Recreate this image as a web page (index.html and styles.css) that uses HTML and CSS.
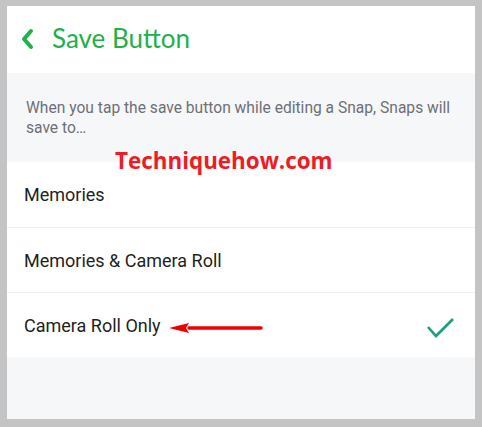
FILE: index.html
```html
<!DOCTYPE html>
<html lang="en">
<head>
    <meta charset="UTF-8">
    <title>Save Button</title>
    <link rel="stylesheet" href="styles.css">
</head>
<body>
    <div class="frame">
        <header class="topbar">
            <svg class="back" width="14" height="22" viewBox="0 0 14 22">
                <path d="M11 3 L4 11 L11 19" fill="none" stroke="#1eb04a" stroke-width="4" stroke-linecap="round" stroke-linejoin="round"/>
            </svg>
            <h1>Save Button</h1>
        </header>

        <div class="note">
            When you tap the save button while editing a Snap, Snaps will save to…
        </div>

        <div class="options">
            <div class="option">Memories</div>
            <div class="option">Memories &amp; Camera Roll</div>
            <div class="option selected">
                <span>Camera Roll Only</span>
                <svg class="check" width="30" height="22" viewBox="0 0 30 22">
                    <path d="M3 10 L11 19 L28 2" fill="none" stroke="#16a07b" stroke-width="2.6"/>
                </svg>
            </div>
        </div>

        <div class="filler"></div>

        <div class="watermark">Techniquehow.com</div>
        <svg class="arrow" width="96" height="14" viewBox="0 0 96 14">
            <path d="M20 7 H92" stroke="#f00000" stroke-width="3.4" stroke-linecap="round"/>
            <path d="M0 7 L20 2 L17 7 L20 12 Z" fill="#f00000"/>
        </svg>
    </div>
</body>
</html>
```

FILE: styles.css
```css
body {
    margin: 0;
    background-color: #c4c4c4;
    font-family: Roboto, "Liberation Sans", sans-serif;
}

.frame {
    position: relative;
    margin: 6px 7px 8px 7px;
    height: 413px;
    background-color: #f6f7f9;
    display: flex;
    flex-direction: column;
}

.topbar {
    background-color: white;
    height: 67px;
    display: flex;
    align-items: center;
    padding-left: 13px;
    box-sizing: border-box;
}

.back {
    margin-right: 18px;
    margin-top: -2px;
}

.topbar h1 {
    margin: 0;
    margin-top: -4px;
    font-family: Lato, "Noto Sans", sans-serif;
    font-weight: normal;
    font-size: 26px;
    color: #1eb04a;
}

.note {
    padding: 25px 16px 24px 19px;
    font-size: 15.6px;
    line-height: 20px;
    color: #6e7074;
}

.options {
    background-color: white;
}

.option {
    height: 65px;
    display: flex;
    align-items: center;
    justify-content: space-between;
    padding: 0 20px 0 17px;
    font-size: 18px;
    color: #1e1f21;
    border-top: 1px solid #f0f0f2;
    box-sizing: border-box;
}

.option:first-child {
    border-top: none;
}

.check {
    margin-top: 6px;
}

.filler {
    flex: 1;
}

.watermark {
    position: absolute;
    left: 108px;
    top: 139px;
    font-family: "Open Sans", sans-serif;
    font-weight: bold;
    font-size: 22.4px;
    color: #ee1c25;
}

.arrow {
    position: absolute;
    left: 162px;
    top: 315px;
}
```
